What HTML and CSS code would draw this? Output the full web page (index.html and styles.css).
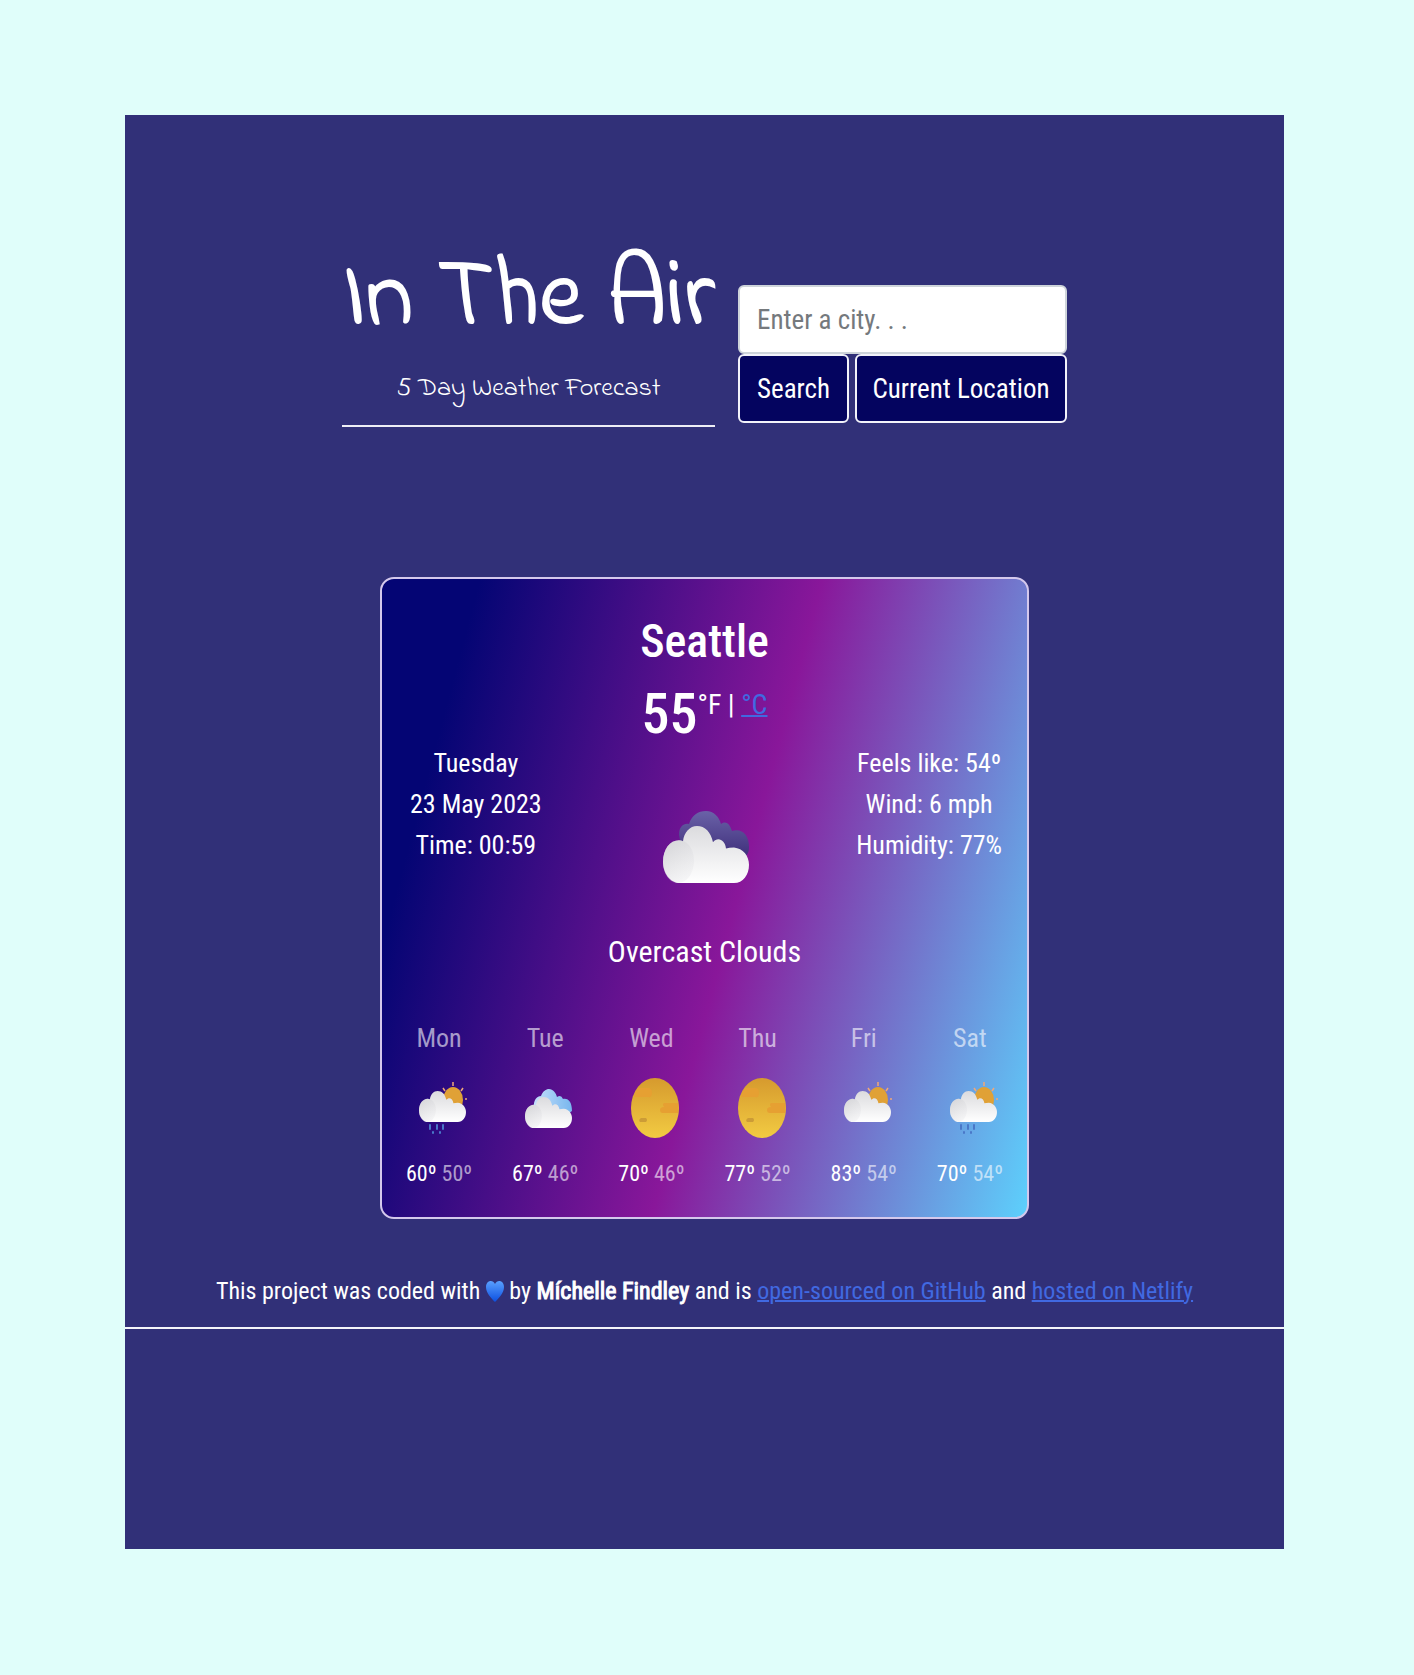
FILE: index.html
```
<!DOCTYPE html>
<html lang="en">
<head>
<meta charset="utf-8">
<title>In The Air</title>
<link rel="stylesheet" href="styles.css">
</head>
<body>
<svg class="defs" aria-hidden="true">
  <defs>
    <linearGradient id="cloud-fill" x1="0" y1="0" x2="0" y2="1"><stop offset="0" stop-color="#dbdbde"/><stop offset="1" stop-color="#ffffff"/></linearGradient>
    <linearGradient id="puff-fill" x1="0" y1="0" x2="1" y2="1"><stop offset="0" stop-color="#c4c4c8" stop-opacity="0.5"/><stop offset="1" stop-color="#e4e4e8" stop-opacity="0.2"/></linearGradient>
    <linearGradient id="dark-fill" x1="0" y1="0" x2="0" y2="1"><stop offset="0" stop-color="#6a62a8"/><stop offset="1" stop-color="#40307c"/></linearGradient>
    <linearGradient id="blue-fill" x1="0" y1="0" x2="1" y2="0"><stop offset="0" stop-color="#c4e0fb"/><stop offset="1" stop-color="#78b6ee"/></linearGradient>
    <linearGradient id="sun-fill" x1="0" y1="0" x2="0" y2="1"><stop offset="0" stop-color="#d69a2e"/><stop offset="1" stop-color="#f2cb42"/></linearGradient>
    <linearGradient id="heart-fill" x1="0" y1="0" x2="0" y2="1"><stop offset="0" stop-color="#5aa0ff"/><stop offset="1" stop-color="#0b4fe0"/></linearGradient>
    <symbol id="cloud" viewBox="0 0 86 56" preserveAspectRatio="none">
      <path fill="url(#cloud-fill)" d="M17 56C7 56 0 46 0 35C0 23 7 14 16 14Q18 14 20 15C21 6 27 0 34 0C42 0 48 6 50 16C55 10 62 14 63 22Q66 21 71 21C80 22 86 29 86 38C86 48 80 56 71 56Z"/>
      <path fill="url(#puff-fill)" d="M15 56C6 56 0 46 0 35C0 23 7 14 16 14C25 14 31 23 31 34C31 45 25 56 15 56Z"/>
    </symbol>
    <symbol id="sun" viewBox="0 0 60 64">
      <ellipse cx="34" cy="32" rx="24" ry="30" fill="url(#sun-fill)"/>
      <path fill="#e6a032" d="M17 12h10q4 0 4 5t-4 4H13q1-5 4-9zM43 27h14q1 5 0 10H42q-3 0-3-3t4-3q-2-3 0-4z"/>
      <path fill="#cc9c36" d="M20 42h5q2 2 0 4h-6q-2-2 1-4z"/>
    </symbol>
    <symbol id="sun-cloud" viewBox="0 0 60 64">
      <path stroke="#f0a878" stroke-width="1.5" d="M44 6v4M34 12l2 3M54 12l-2 3M56 23h2"/>
      <ellipse cx="44" cy="24" rx="10" ry="13" fill="#e0a136"/>
      <use href="#cloud" x="10" y="15" width="47" height="31"/>
    </symbol>
    <symbol id="rain" viewBox="0 0 60 64">
      <use href="#sun-cloud" width="60" height="64"/>
      <path stroke="#4a78c8" stroke-width="2" stroke-linecap="round" d="M21 49v4M28 49v4M34 49v4M24 56v1M31 56v1"/>
    </symbol>
    <symbol id="two-clouds" viewBox="0 0 60 64">
      <path fill="url(#blue-fill)" d="M19 32C18 24 22 20 26 20C28 15 31 13 34 13C38 13 41 17 42 21Q46 18 48 23C54 22 57 27 57 35L50 40H24Z"/>
      <use href="#cloud" x="10" y="21" width="47" height="31"/>
    </symbol>
  </defs>
</svg>
<main class="panel">
  <header class="top">
    <div class="brand">
      <h1>In The Air</h1>
      <p class="tagline">5 Day Weather Forecast</p>
    </div>
    <form class="search">
      <input type="text" placeholder="Enter a city. . ." aria-label="City">
      <div class="buttons">
        <button type="button">Search</button>
        <button type="button" class="wide">Current Location</button>
      </div>
    </form>
  </header>

  <section class="card">
    <h2>Seattle</h2>
    <div class="temp"><span class="degrees">55</span><span class="units">°F | <a href="#">°C</a></span></div>
    <div class="now">
      <ul><li>Tuesday</li><li>23 May 2023</li><li>Time: 00:59</li></ul>
      <svg class="now-icon" viewBox="0 0 86 74" role="img" aria-label="Overcast clouds">
        <path fill="url(#dark-fill)" d="M16 24C16 15 21 12 26 13C29 4 35 0 43 0C51 0 56 6 58 13Q65 8 69 20C79 17 86 24 86 36Q86 42 83 45H20Z"/>
        <use href="#cloud" y="15" width="86" height="57"/>
      </svg>
      <ul><li>Feels like: 54º</li><li>Wind: 6 mph</li><li>Humidity: 77%</li></ul>
    </div>
    <p class="summary">Overcast Clouds</p>
    <div class="forecast">
      <div class="day"><h3>Mon</h3><svg><use href="#rain"/></svg><p>60º <span>50º</span></p></div>
      <div class="day"><h3>Tue</h3><svg><use href="#two-clouds"/></svg><p>67º <span>46º</span></p></div>
      <div class="day"><h3>Wed</h3><svg><use href="#sun"/></svg><p>70º <span>46º</span></p></div>
      <div class="day"><h3>Thu</h3><svg><use href="#sun"/></svg><p>77º <span>52º</span></p></div>
      <div class="day"><h3>Fri</h3><svg><use href="#sun-cloud"/></svg><p>83º <span>54º</span></p></div>
      <div class="day"><h3>Sat</h3><svg><use href="#rain"/></svg><p>70º <span>54º</span></p></div>
    </div>
  </section>

  <footer>This project was coded with <svg class="heart" viewBox="0 0 18 22" role="img" aria-label="love"><path fill="url(#heart-fill)" d="M9 4C7-1 0 0 0 7C0 13 5 18 9 22C13 18 18 13 18 7C18 0 11-1 9 4Z"/></svg> by <span class="author">Míchelle Findley</span> and is <a href="#">open-sourced on GitHub</a> and <a href="#">hosted on Netlify</a></footer>
</main>
</body>
</html>
```
FILE: styles.css
```
* { box-sizing: border-box; }

body {
  margin: 0;
  padding: 115px 130px 126px 125px;
  background: #e0fefa;
  color: #fff;
  font-family: "Roboto Condensed", "Roboto", sans-serif;
  font-size: 26px;
}

h1, h2, h3, p, ul { margin: 0; padding: 0; font-weight: 400; }
ul { list-style: none; }
a { color: #4169e1; text-decoration-thickness: 2px; }

.defs { position: absolute; width: 0; height: 0; }

.panel { background: #313078; padding: 110px 0 220px; }

.top { display: flex; justify-content: center; gap: 23px; }
.brand { width: 373px; text-align: center; border-bottom: 2px solid #eeeef6; padding-bottom: 22px; }
h1, .tagline { font-family: "Indie Flower", cursive; white-space: nowrap; }
h1 { font-size: 97px; line-height: 150px; -webkit-text-stroke: 2px #fff; }
.tagline { font-size: 26px; line-height: 28px; }

.search { width: 329px; padding-top: 60px; }
.search input, .search button {
  font: inherit;
  font-size: 27px;
  height: 69px;
  border-radius: 6px;
  padding: 0 17px;
}
.search input { display: block; width: 100%; border: 2px solid #ced4da; background: #fff; }
.search input::placeholder { color: #75797d; }
.buttons { display: flex; gap: 6px; }
.search button { background: #04045f; color: #fff; border: 2px solid #f2f2fa; white-space: nowrap; }
.search .wide { flex: 1; padding: 0; }

.card {
  max-width: 649px;
  margin: 150px auto 0;
  padding: 34px 4px 26px;
  border: 2px solid #d4c8ec;
  border-radius: 14px;
  background: linear-gradient(105deg, #040574 12%, #89179a 54%, #5dd0fc 100%);
  text-align: center;
}
h2 { font-size: 46px; line-height: 56px; font-weight: 500; }
.temp { display: flex; justify-content: center; margin-top: 16px; }
.degrees { font-size: 56px; line-height: 58px; font-weight: 500; }
.units { font-size: 28px; line-height: 40px; }
.now { display: grid; grid-template-columns: 1fr auto 1fr; justify-items: start; padding: 0 21px 0 24px; line-height: 41px; }
.now ul:last-child { justify-self: end; }
.now-icon { width: 86px; height: 74px; margin-top: 68px; }
.summary { font-size: 30px; line-height: 40px; margin-top: 47px; }
.forecast { display: grid; grid-template-columns: repeat(6, 1fr); margin-top: 46px; }
.day h3 { font-size: 26px; line-height: 40px; color: rgba(255, 255, 255, 0.6); }
.day svg { display: block; width: 60px; height: 64px; margin: 18px auto 17px; }
.day p { font-size: 22px; line-height: 34px; }
.day span { color: rgba(255, 255, 255, 0.6); }

footer {
  margin-top: 52px;
  padding-bottom: 16px;
  border-bottom: 2px solid #f4f4fa;
  font-size: 24px;
  line-height: 40px;
  text-align: center;
}
.heart { width: 18px; height: 22px; vertical-align: -3px; }
.author { -webkit-text-stroke: 1px #fff; }
```
